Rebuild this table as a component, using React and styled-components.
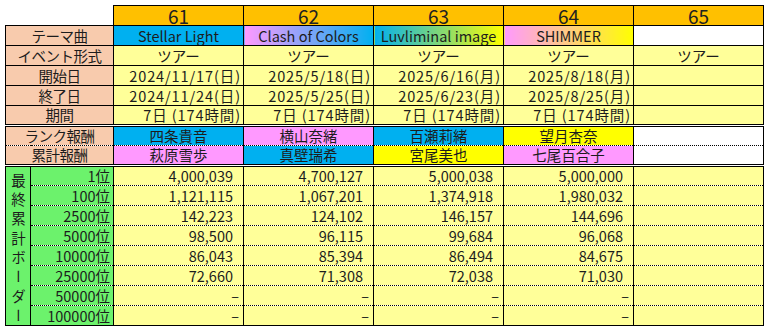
import React from 'react'
import styled, { createGlobalStyle } from 'styled-components'

const GlobalStyle = createGlobalStyle`
    html, body {
        margin: 0;
        padding: 0;
        background: #fff;
    }
`

const C = {
    orange: '#ffc000',
    peach: '#f8cbad',
    cream: '#ffff99',
    blue: '#00b0f0',
    pink: '#ff99ff',
    yellow: '#ffff00',
    green: '#6cf26c',
    white: '#ffffff',
}

const Sheet = styled.table`
    border-collapse: collapse;
    table-layout: fixed;
    width: 759px;
    margin: 5px 0 0 5px;
    font-family: "Noto Sans CJK JP", "Liberation Sans", sans-serif;
    font-size: 14.5px;
    color: #1c1c1c;
`

const Row = styled.tr`
    height: 20px;
`

const Cell = styled.td`
    padding: 0 ${({ $pad }) => $pad || 0}px 0 0;
    line-height: 18px;
    white-space: nowrap;
    overflow: hidden;
    text-align: ${({ $align }) => $align || 'center'};
    background: ${({ $bg }) => $bg || C.cream};
    border-left: 1px solid #000;
    border-right: 1px solid #000;
    border-top: ${({ $top }) => $top ? '1px solid #000' : 'none'};
    border-bottom: ${({ $bottom }) =>
        $bottom === 'dotted' ? '1px dotted #000'
            : $bottom === 'double' ? '3px double #000'
                : '1px solid #000'};
`

const Blank = styled.td`
    border: none;
    background: transparent;
`

const Head = styled(Cell)`
    font-size: 19px;
    overflow: visible;
    color: #222;
`

const Label = styled(Cell)`
    letter-spacing: -0.5px;
`

const Date = styled(Cell)`
    letter-spacing: 0.9px;
`

const Side = styled.td`
    background: ${C.green};
    border: 1px solid #000;
    vertical-align: top;
    padding: 0;
    text-align: center;
`

// fixed height so the vertical caption never stretches the rows
const SideText = styled.div`
    writing-mode: vertical-rl;
    text-orientation: upright;
    white-space: nowrap;
    height: 140px;
    margin: 6px auto 0;
    letter-spacing: 4.8px;
    line-height: 24px;
    font-size: 14.5px;
`

const events = [
    {
        no: 61, song: 'Stellar Light', songBg: C.blue,
        start: '2024/11/17(日)', end: '2024/11/24(日)', term: '7日 (174時間)',
        rank: ['四条貴音', C.blue], total: ['萩原雪歩', C.pink],
        borders: ['4,000,039', '1,121,115', '142,223', '98,500', '86,043', '72,660', null, null],
    },
    {
        no: 62, song: 'Clash of Colors', songBg: `linear-gradient(to right, ${C.pink}, ${C.blue})`,
        start: '2025/5/18(日)', end: '2025/5/25(日)', term: '7日 (174時間)',
        rank: ['横山奈緒', C.pink], total: ['真壁瑞希', C.blue],
        borders: ['4,700,127', '1,067,201', '124,102', '96,115', '85,394', '71,308', null, null],
    },
    {
        no: 63, song: 'Luvliminal image', songBg: `linear-gradient(to right, ${C.blue}, ${C.yellow})`,
        start: '2025/6/16(月)', end: '2025/6/23(月)', term: '7日 (174時間)',
        rank: ['百瀬莉緒', C.blue], total: ['宮尾美也', C.yellow],
        borders: ['5,000,038', '1,374,918', '146,157', '99,684', '86,494', '72,038', null, null],
    },
    {
        no: 64, song: 'SHIMMER', songBg: `linear-gradient(to right, ${C.pink}, ${C.yellow})`,
        start: '2025/8/18(月)', end: '2025/8/25(月)', term: '7日 (174時間)',
        rank: ['望月杏奈', C.yellow], total: ['七尾百合子', C.pink],
        borders: ['5,000,000', '1,980,032', '144,696', '96,068', '84,675', '71,030', null, null],
    },
    {
        // no results yet: empty cells, not dashes
        no: 65, song: '', songBg: C.white,
        start: '', end: '', term: '',
        rank: ['', C.white], total: ['', C.white],
        borders: Array(8).fill(undefined),
    },
]

const ranks = ['1位', '100位', '2500位', '5000位', '10000位', '25000位', '50000位', '100000位']

const BorderValue = ({ value, last }) => {
    const bottom = last ? 'solid' : 'dotted'
    if (value === null) return <Cell $align="right" $pad={4} $bottom={bottom}>–</Cell>
    if (value === undefined) return <Cell $bottom={bottom} />
    return <Cell $align="right" $pad={10} $bottom={bottom}>{value}</Cell>
}

const App = () => (
    <>
        <GlobalStyle />
        <Sheet>
            <colgroup>
                <col style={{ width: 25 }} />
                <col style={{ width: 83 }} />
                {events.map(e => <col key={e.no} style={{ width: 130 }} />)}
            </colgroup>
            <tbody>
                <Row>
                    <Blank colSpan={2} />
                    {events.map(e => <Head key={e.no} $top $bg={C.orange}>{e.no}</Head>)}
                </Row>
                <Row>
                    <Label colSpan={2} $top $bg={C.peach}>テーマ曲</Label>
                    {events.map(e => <Cell key={e.no} $bg={e.songBg}>{e.song}</Cell>)}
                </Row>
                <Row>
                    <Label colSpan={2} $bg={C.peach}>イベント形式</Label>
                    {events.map(e => <Cell key={e.no}>ツアー</Cell>)}
                </Row>
                <Row>
                    <Label colSpan={2} $bg={C.peach}>開始日</Label>
                    {events.map(e => <Date key={e.no} $align="right" $pad={2}>{e.start}</Date>)}
                </Row>
                <Row>
                    <Label colSpan={2} $bg={C.peach}>終了日</Label>
                    {events.map(e => <Date key={e.no} $align="right" $pad={2}>{e.end}</Date>)}
                </Row>
                <Row>
                    <Label colSpan={2} $bg={C.peach} $bottom="double">期間</Label>
                    {events.map(e => <Date key={e.no} $align="right" $pad={2} $bottom="double">{e.term}</Date>)}
                </Row>
                <Row>
                    <Label colSpan={2} $bg={C.peach} $bottom="dotted">ランク報酬</Label>
                    {events.map(e => <Cell key={e.no} $bg={e.rank[1]} $bottom="dotted">{e.rank[0]}</Cell>)}
                </Row>
                <Row>
                    <Label colSpan={2} $bg={C.peach} $bottom="double">累計報酬</Label>
                    {events.map(e => <Cell key={e.no} $bg={e.total[1]} $bottom="double">{e.total[0]}</Cell>)}
                </Row>
                {ranks.map((r, i) => {
                    const last = i === ranks.length - 1
                    return (
                        <Row key={r}>
                            {i === 0 && (
                                <Side rowSpan={ranks.length}>
                                    <SideText>最終累計ボーダー</SideText>
                                </Side>
                            )}
                            <Cell $bg={C.green} $align="right" $pad={3} $bottom={last ? 'solid' : 'dotted'}>{r}</Cell>
                            {events.map(e => <BorderValue key={e.no} value={e.borders[i]} last={last} />)}
                        </Row>
                    )
                })}
            </tbody>
        </Sheet>
    </>
)

export default App
